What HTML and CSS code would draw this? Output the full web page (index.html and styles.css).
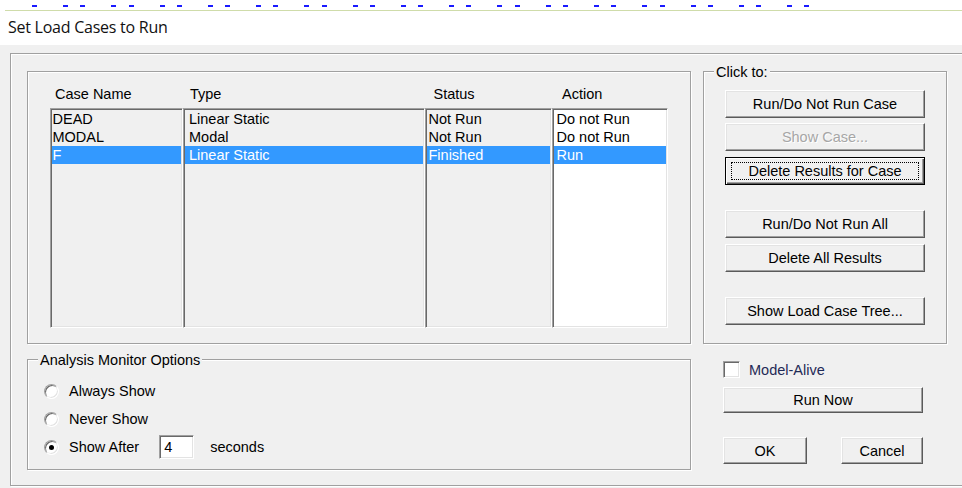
FILE: index.html
```html
<!DOCTYPE html>
<html>
<head>
<meta charset="utf-8">
<title>Set Load Cases to Run</title>
<link rel="stylesheet" href="styles.css">
</head>
<body>
<header class="page-top">
  <div class="ruler-dashes"></div>
  <div class="ruler-line"></div>
  <h1 class="title">Set Load Cases to Run</h1>
</header>

<div class="dialog">
  <div class="frame">
    <div class="layout">

      <section class="etched cases">
        <div class="cols heads">
          <div class="head h-name">Case Name</div>
          <div class="head h-type">Type</div>
          <div class="head h-status">Status</div>
          <div class="head h-action">Action</div>
        </div>
        <div class="cols lists">
          <div class="listbox l-name">
            <div class="item">DEAD</div>
            <div class="item">MODAL</div>
            <div class="item sel">F</div>
          </div>
          <div class="listbox l-type">
            <div class="item">Linear Static</div>
            <div class="item">Modal</div>
            <div class="item sel">Linear Static</div>
          </div>
          <div class="listbox l-status">
            <div class="item">Not Run</div>
            <div class="item">Not Run</div>
            <div class="item sel">Finished</div>
          </div>
          <div class="listbox l-action">
            <div class="item">Do not Run</div>
            <div class="item">Do not Run</div>
            <div class="item sel">Run</div>
          </div>
        </div>
      </section>

      <section class="etched group clickto">
        <div class="legend">Click to:</div>
        <button class="btn b1">Run/Do Not Run Case</button>
        <button class="btn b2" disabled>Show Case...</button>
        <button class="btn b3 default">Delete Results for Case</button>
        <button class="btn b4">Run/Do Not Run All</button>
        <button class="btn b5">Delete All Results</button>
        <button class="btn b6">Show Load Case Tree...</button>
      </section>

      <section class="etched group monitor">
        <div class="legend">Analysis Monitor Options</div>
        <div class="radio-row r1"><span class="radio"></span><span class="lbl">Always Show</span></div>
        <div class="radio-row r2"><span class="radio"></span><span class="lbl">Never Show</span></div>
        <div class="radio-row r3">
          <span class="radio checked"></span><span class="lbl">Show After</span>
          <span class="field">4</span>
          <span class="lbl secs">seconds</span>
        </div>
      </section>

      <section class="actions">
        <div class="check-row"><span class="checkbox"></span><span class="check-lbl">Model-Alive</span></div>
        <button class="btn run-now">Run Now</button>
        <div class="ok-row">
          <button class="btn ok">OK</button>
          <button class="btn cancel">Cancel</button>
        </div>
      </section>

    </div>
  </div>
</div>
</body>
</html>
```

FILE: styles.css
```css
html, body {
  margin: 0;
  padding: 0;
  background: #ffffff;
  overflow: hidden;
}

body {
  width: 962px;
  height: 488px;
  font-family: "Liberation Sans", Arial, sans-serif;
  font-size: 14.5px;
  color: #000;
}

/* strip above the dialog */
.page-top {
  height: 45px;
  padding-top: 5px;
  box-sizing: border-box;
  background: #fff;
}

.ruler-dashes {
  margin-left: 32px;
  width: 778px;
  height: 2px;
  background: repeating-linear-gradient(90deg,
    #1a1aff 0 5px,
    transparent 5px 31px,
    #1a1aff 31px 36px,
    transparent 36px 48.27px);
}

.ruler-line {
  margin: 3px 0 0 5px;
  height: 1px;
  background: #cfdcaa;
}

.title {
  margin: 0;
  padding: 5px 0 0 8px;
  font-family: "Open Sans", "Noto Sans", sans-serif;
  font-weight: 400;
  font-size: 16px;
  line-height: 22px;
  letter-spacing: -0.25px;
  color: #111;
}

/* dialog body */
.dialog {
  background: #f0f0f0;
  height: 443px;
  padding: 8px 0 0 10px;
  box-sizing: border-box;
}

.etched {
  border: 1px solid #a0a0a0;
  box-shadow: inset 1px 1px 0 #fff, 1px 1px 0 #fff;
  box-sizing: border-box;
}

.frame {
  border: 1px solid #a0a0a0;
  box-shadow: inset 1px 1px 0 #fff, 1px 1px 0 #fff;
  width: 1000px;
  height: 433px;
  box-sizing: border-box;
  padding: 17px 0 0 16px;
}

.layout {
  display: grid;
  grid-template-columns: 664px 244px;
  grid-template-rows: 273px 111px;
  column-gap: 12px;
  row-gap: 15px;
}

/* case list */
.cases {
  padding: 13px 0 0 22px;
}

.cols {
  display: grid;
  grid-template-columns: 133px 242px 127px 116px;
}

.heads {
  height: 18px;
  line-height: 18px;
  margin-bottom: 5px;
}

.h-name { padding-left: 5px; }
.h-type { padding-left: 7px; }
.h-status { padding-left: 8.5px; }
.h-action { padding-left: 10px; }

.lists {
  height: 220px;
}

.listbox {
  border-top: 1px solid #a0a0a0;
  border-left: 1px solid #a0a0a0;
  border-right: 1px solid #fff;
  border-bottom: 1px solid #fff;
  box-shadow: inset 1px 1px 0 #696969, inset -1px -1px 0 #e3e3e3;
  background: #f0f0f0;
  padding: 1px;
  box-sizing: border-box;
}

.l-action {
  background: #fff;
}

.item {
  height: 18px;
  line-height: 18px;
  white-space: nowrap;
}

.l-name .item { padding-left: 0.5px; }
.l-type .item { padding-left: 4px; }
.l-status .item { padding-left: 1.5px; }
.l-action .item { padding-left: 2.5px; }

.item.sel {
  background: #3399ff;
  color: #fff;
}

/* group boxes: caption sits on the top edge, 10px in from the left border */
.legend {
  width: fit-content;
  height: 18px;
  line-height: 18px;
  margin-top: -9px;
  padding: 0 2px;
  background: #f0f0f0;
}

.clickto {
  padding-left: 21px;
  display: flex;
  flex-direction: column;
  align-items: flex-start;
}

.clickto .legend { margin-left: -11px; }
.monitor .legend { margin-left: -6px; }

/* push buttons */
.btn {
  width: 200px;
  height: 28px;
  padding: 0;
  font-family: "Liberation Sans", Arial, sans-serif;
  font-size: 14.5px;
  color: #000;
  background: #f0f0f0;
  border-top: 1px solid #fff;
  border-left: 1px solid #fff;
  border-right: 1px solid #5a5a5a;
  border-bottom: 1px solid #5a5a5a;
  box-shadow: inset -1px -1px 0 #a0a0a0, inset 1px 1px 0 #e3e3e3;
  box-sizing: border-box;
  position: relative;
}

.btn[disabled] {
  color: #a6a6a6;
  text-shadow: 1px 1px 0 #fff;
}

.btn.default {
  border: 1px solid #000;
  box-shadow: inset 1px 1px 0 #fff, inset -1px -1px 0 #5a5a5a, inset -2px -2px 0 #a0a0a0;
}

.btn.default::after {
  content: "";
  position: absolute;
  inset: 4px 5px;
  border: 1px dotted #000;
}

.b1 { margin-top: 9px; }
.b2 { margin-top: 5px; }
.b3 { margin-top: 6px; }
.b4 { margin-top: 25px; }
.b5 { margin-top: 6px; }
.b6 { margin-top: 25px; }

/* analysis monitor options */
.monitor {
  padding-left: 16px;
}

.radio-row {
  display: flex;
  align-items: center;
  height: 26px;
}

.r1 { margin-top: 9px; }
.r2 { margin-top: 2px; }
.r3 { margin-top: 2px; }

.radio {
  width: 15px;
  height: 15px;
  border-radius: 50%;
  border: 1px solid;
  border-color: #a0a0a0 #fff #fff #a0a0a0;
  box-shadow: inset 1px 1px 0 #696969, inset -1px -1px 0 #e3e3e3;
  background: #fff;
  box-sizing: border-box;
  display: flex;
  align-items: center;
  justify-content: center;
  flex: none;
}

.radio.checked::before {
  content: "";
  width: 5px;
  height: 5px;
  border-radius: 50%;
  background: #000;
}

.lbl {
  margin-left: 10px;
  line-height: 18px;
}

.field {
  margin-left: 20px;
  width: 35px;
  height: 24px;
  line-height: 22px;
  padding-left: 4px;
  box-sizing: border-box;
  background: #fff;
  border-top: 1px solid #a0a0a0;
  border-left: 1px solid #a0a0a0;
  border-right: 1px solid #fff;
  border-bottom: 1px solid #fff;
  box-shadow: inset 1px 1px 0 #696969, inset -1px -1px 0 #e3e3e3;
}

.secs {
  margin-left: 16px;
}

/* bottom right controls */
.actions {
  padding: 2px 0 0 20px;
}

.check-row {
  display: flex;
  align-items: center;
  height: 17px;
}

.checkbox {
  width: 17px;
  height: 17px;
  box-sizing: border-box;
  background: #fff;
  border-top: 1px solid #a0a0a0;
  border-left: 1px solid #a0a0a0;
  border-right: 1px solid #fff;
  border-bottom: 1px solid #fff;
  box-shadow: inset 1px 1px 0 #696969, inset -1px -1px 0 #e3e3e3;
}

.check-lbl {
  margin-left: 9px;
  color: #1f2a56;
}

.run-now {
  margin-top: 9px;
  height: 26px;
}

.ok-row {
  margin-top: 24px;
  width: 200px;
  display: flex;
  justify-content: space-between;
}

.ok-row .btn {
  height: 27px;
}

.ok { width: 84px; }
.cancel { width: 82px; }
```
